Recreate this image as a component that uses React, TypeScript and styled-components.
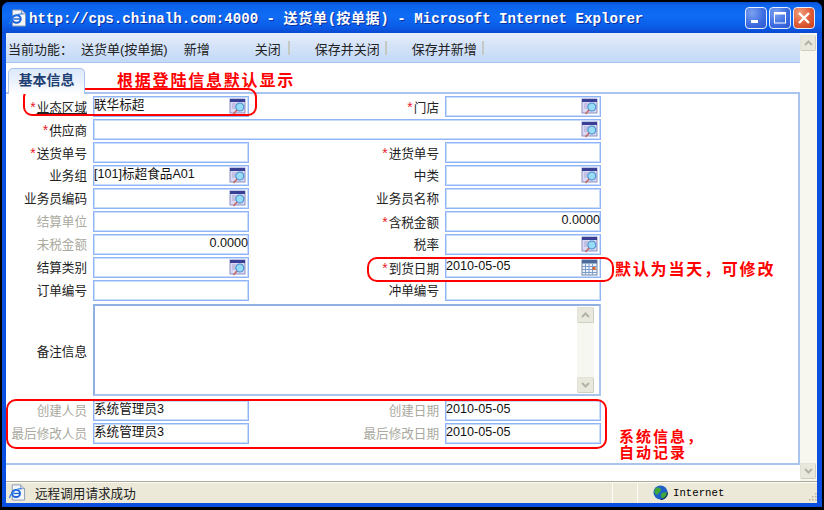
import React from 'react';
import styled, { createGlobalStyle } from 'styled-components';

const SANS = `"Liberation Sans", "Noto Sans CJK SC", sans-serif`;
const MONO = `"Liberation Mono", "Noto Sans CJK SC", monospace`;
const FIELD_BORDER = '#8fb4f8';
const PANEL_BORDER = '#a9c4ee';

const GlobalStyle = createGlobalStyle`
  html, body {
    margin: 0;
    padding: 0;
    background: #000;
  }
  body {
    font-family: ${SANS};
  }
`;

// =============================================================================
// Window chrome
// =============================================================================

const Screen = styled.div`
  position: relative;
  width: 824px;
  height: 510px;
  overflow: hidden;
  background: #000;
  padding: 2px 2px 3px;
  box-sizing: border-box;
`;

const Frame = styled.div`
  height: 100%;
  display: flex;
  flex-direction: column;
  box-sizing: border-box;
  padding: 0 5px 4px 4px;
  background: #0a4fdf;
  border-radius: 7px 7px 0 0;
`;

const TitleBar = styled.div`
  height: 31px;
  flex: none;
  display: flex;
  align-items: center;
  margin: 0 -5px 0 -4px;
  padding: 1px 7px 0 6px;
  box-sizing: border-box;
  border-radius: 7px 7px 0 0;
  background: linear-gradient(180deg, #0a4fd6 0%, #0b63ec 12%, #0f6cf4 45%, #0a5ce8 80%, #0a49d2 100%);
`;

const TitleIcon = styled.svg`
  width: 19px;
  height: 18px;
  flex: none;
  margin-right: 2px;
`;

const TitleText = styled.div`
  font-family: ${MONO};
  font-size: 14.15px;
  font-weight: 700;
  color: #fff;
  text-shadow: 1px 1px 0 #0a2f9c;
  white-space: pre;
  line-height: 18px;
`;

const TitleCjk = styled.span`
  font-family: "Noto Sans CJK SC", sans-serif;
  font-size: 14px;
  letter-spacing: 0.7px;
`;

const WindowButtons = styled.div`
  margin-left: auto;
  display: flex;
  gap: 2px;
`;

const WindowButton = styled.div<{ $close?: boolean }>`
  width: 22px;
  height: 22px;
  box-sizing: border-box;
  border: 1px solid #e8eefc;
  border-radius: 4px;
  display: flex;
  align-items: center;
  justify-content: center;
  background: ${(p) =>
    p.$close
      ? 'radial-gradient(circle at 30% 25%, #f0a080 0%, #e2603a 50%, #c83c18 100%)'
      : 'radial-gradient(circle at 30% 25%, #7ea2f0 0%, #3f6fe2 55%, #2a55cc 100%)'};
`;

const Content = styled.div`
  flex: 1;
  min-height: 0;
  display: flex;
  background: #fff;
`;

const Main = styled.div`
  flex: 1;
  min-width: 0;
  display: flex;
  flex-direction: column;
`;

// =============================================================================
// Toolbar
// =============================================================================

const Toolbar = styled.div`
  height: 30px;
  flex: none;
  display: flex;
  align-items: center;
  padding: 1px 0 0 2px;
  box-sizing: border-box;
  border-bottom: 1px solid #a9c4ee;
  background: linear-gradient(180deg, #e6eefb 0%, #d3e2f8 50%, #c3d9f7 100%);
  font-size: 13px;
  color: #222;
`;

const ToolItem = styled.span<{ $gap?: number }>`
  margin-left: ${(p) => p.$gap ?? 0}px;
  white-space: nowrap;
`;

const ToolSeparator = styled.span<{ $gap: number }>`
  width: 2px;
  height: 14px;
  margin-left: ${(p) => p.$gap}px;
  background: #c6c8c4;
`;

// =============================================================================
// Tabs and form
// =============================================================================

const TabStrip = styled.div`
  height: 29px;
  flex: none;
  display: flex;
  align-items: flex-end;
  padding-left: 2px;
  box-sizing: border-box;
`;

const Tab = styled.div`
  width: 77px;
  height: 26px;
  margin-bottom: -2px;
  position: relative;
  z-index: 1;
  box-sizing: border-box;
  border: 1px solid ${PANEL_BORDER};
  border-bottom: 0;
  border-radius: 5px 5px 0 0;
  background: linear-gradient(180deg, #dce8fa 0%, #eef4fd 60%, #fff 100%);
  color: #1d3f73;
  font-size: 14px;
  font-weight: 700;
  text-align: center;
  line-height: 23px;
`;

const Panel = styled.div`
  height: 373px;
  flex: none;
  box-sizing: border-box;
  border-top: 2px solid ${PANEL_BORDER};
  border-right: 2px solid ${PANEL_BORDER};
  border-bottom: 2px solid ${PANEL_BORDER};
  padding-top: 2px;
`;

const FormGrid = styled.div`
  display: grid;
  grid-template-columns: 87px 156px 196px 156px;
  grid-template-rows: repeat(9, 21px) auto repeat(2, 21px);
  row-gap: 2px;
`;

const Label = styled.div<{ $muted?: boolean; $underline?: boolean }>`
  font-size: 12.6px;
  line-height: 15px;
  padding: 4px 6px 0 0;
  text-align: right;
  white-space: nowrap;
  color: ${(p) => (p.$muted ? '#a9a99e' : '#222')};
  span.text {
    text-decoration: ${(p) => (p.$underline ? 'underline' : 'none')};
  }
`;

const NoteLabel = styled(Label)`
  align-self: center;
`;

const Star = styled.span`
  color: #e8202a;
  font-size: 14px;
  margin-right: 1px;
`;

const Field = styled.div<{ $wide?: boolean; $right?: boolean }>`
  grid-column: ${(p) => (p.$wide ? 'span 3' : 'auto')};
  box-sizing: border-box;
  height: 21px;
  display: flex;
  align-items: flex-start;
  justify-content: ${(p) => (p.$right ? 'flex-end' : 'space-between')};
  border: 1px solid ${FIELD_BORDER};
  box-shadow: inset 0 0 0 1px #c9dcfc;
  padding-top: 1px;
  font-size: 12.6px;
  line-height: 15px;
  color: #111;
  background: #fff;
  white-space: nowrap;
`;

const FieldIcon = styled.svg`
  flex: none;
  width: 17px;
  height: 17px;
  margin-left: auto;
  margin-right: 2px;
`;

const NoteArea = styled.div`
  grid-column: span 3;
  height: 92px;
  margin: 1px 0 2px;
  box-sizing: border-box;
  display: flex;
  justify-content: flex-end;
  border: 2px solid ${PANEL_BORDER};
  border-top-color: #8fb0e0;
  border-left-color: #8fb0e0;
  padding: 1px 5px 1px 0;
  background: #fff;
`;

const NoteScroll = styled.div`
  width: 17px;
  display: flex;
  flex-direction: column;
  justify-content: space-between;
  background: #f7f7f1;
`;

// =============================================================================
// Scrollbars
// =============================================================================

const PageScroll = styled.div`
  width: 17px;
  flex: none;
  display: flex;
  flex-direction: column;
  justify-content: space-between;
  padding: 2px 1px 2px 0;
  box-sizing: border-box;
  background: #f7f7f0;
`;

const ScrollButton = styled.div`
  height: 16px;
  flex: none;
  display: flex;
  align-items: center;
  justify-content: center;
  box-sizing: border-box;
  border: 1px solid #e2e1d6;
  border-right-color: #cfcec2;
  border-bottom-color: #cfcec2;
  border-radius: 2px;
  background: #e9e8dc;
`;

// =============================================================================
// Status bar
// =============================================================================

const StatusBar = styled.div`
  height: 22px;
  flex: none;
  display: flex;
  align-items: center;
  box-sizing: border-box;
  border-top: 1px solid #aca899;
  box-shadow: inset 0 1px 0 #fdfdf8;
  background: #ece9d8;
  font-size: 12.6px;
  color: #222;
`;

const StatusCell = styled.div<{ $width: number }>`
  width: ${(p) => p.$width}px;
  height: 100%;
  flex: none;
  display: flex;
  align-items: center;
  box-sizing: border-box;
  border-right: 1px solid #fdfdf8;
`;

const StatusIcon = styled.svg`
  width: 18px;
  height: 17px;
  flex: none;
  margin: 0 9px 0 2px;
`;

const ZoneIcon = styled.svg`
  width: 15px;
  height: 15px;
  flex: none;
  margin: 0 5px 0 15px;
`;

const ZoneText = styled.span`
  font-family: ${MONO};
  font-size: 10.7px;
  color: #000;
`;

const Grip = styled.svg`
  width: 10px;
  height: 10px;
  margin: 8px 0 0 auto;
`;

// =============================================================================
// Red annotations drawn over the screenshot
// =============================================================================

const Callout = styled.div<{ $x: number; $y: number; $w: number; $h: number; $r: number }>`
  position: absolute;
  left: ${(p) => p.$x}px;
  top: ${(p) => p.$y}px;
  width: ${(p) => p.$w}px;
  height: ${(p) => p.$h}px;
  box-sizing: border-box;
  border: 2px solid #f00;
  border-radius: ${(p) => p.$r}px;
  pointer-events: none;
`;

const Note = styled.div<{ $x: number; $y: number; $size: number; $pitch: number }>`
  position: absolute;
  left: ${(p) => p.$x}px;
  top: ${(p) => p.$y}px;
  color: #f00;
  font-family: "Noto Sans CJK SC", sans-serif;
  font-size: ${(p) => p.$size}px;
  font-weight: 700;
  line-height: 16px;
  letter-spacing: ${(p) => p.$pitch}px;
  white-space: nowrap;
`;

// =============================================================================
// Icons
// =============================================================================

const LookupIcon = () => (
  <FieldIcon viewBox="0 0 17 17">
    <rect x="1" y="1" width="15" height="14" fill="#dcdaf2" stroke="#8a8fc4" strokeWidth="1" />
    <rect x="1" y="1" width="15" height="3" fill="#3a3f96" />
    <path d="M3 6h4M3 8h3M3 10h3" stroke="#a9a6d0" strokeWidth="1" />
    <circle cx="10.8" cy="9" r="4" fill="#96dcf6" stroke="#4f8fd0" strokeWidth="1.2" />
    <path d="M8 12L4.5 16" stroke="#c46a6a" strokeWidth="1.6" />
  </FieldIcon>
);

const CalendarIcon = () => (
  <FieldIcon viewBox="0 0 17 17">
    <rect x="1" y="1" width="15" height="15" fill="#eef2fa" stroke="#6f83a8" strokeWidth="1" />
    <rect x="1" y="1" width="15" height="3.5" fill="#4a6a9c" />
    <path d="M1 7.5h15M1 10.5h15M1 13.5h15M4.5 4.5v11M8 4.5v11M11.5 4.5v11" stroke="#7f9cc8" strokeWidth="1" />
    <rect x="11.5" y="8" width="3" height="3" fill="#e0602a" />
  </FieldIcon>
);

const Chevron = ({ up }: { up?: boolean }) => (
  <svg width="9" height="6" viewBox="0 0 9 6">
    <path d={up ? 'M1 5l3.5-3.5L8 5' : 'M1 1l3.5 3.5L8 1'} fill="none" stroke="#b4b4a6" strokeWidth="2" />
  </svg>
);

const IeGlyph = () => (
  <>
    <path d="M4 1h9l4 4v12H4z" fill="#f4f6fa" stroke="#8a9ab8" strokeWidth="1" />
    <path d="M13 1v4h4" fill="#cfd8ea" stroke="#8a9ab8" strokeWidth="1" />
    <ellipse cx="8" cy="10" rx="4.2" ry="3.8" fill="none" stroke="#1c62d8" strokeWidth="2" />
    <path d="M5 10h6.5" stroke="#1c62d8" strokeWidth="1.4" />
    <path d="M1 15C2 9 9 4 14 5" fill="none" stroke="#2f7fe8" strokeWidth="1.2" />
  </>
);

// =============================================================================
// Data
// =============================================================================

type Row = {
  label: string;
  required?: boolean;
  muted?: boolean;
  underline?: boolean;
  value?: string;
  right?: boolean;
  icon?: 'lookup' | 'calendar';
};

const TOP_ROWS: Row[] = [
  { label: '业态区域', required: true, underline: true, value: '联华标超', icon: 'lookup' },
  { label: '门店', required: true, icon: 'lookup' },
];

const MIDDLE_ROWS: Row[] = [
  { label: '送货单号', required: true },
  { label: '进货单号', required: true },
  { label: '业务组', value: '[101]标超食品A01', icon: 'lookup' },
  { label: '中类', icon: 'lookup' },
  { label: '业务员编码', icon: 'lookup' },
  { label: '业务员名称' },
  { label: '结算单位', muted: true },
  { label: '含税金额', required: true, value: '0.0000', right: true },
  { label: '未税金额', muted: true, value: '0.0000', right: true },
  { label: '税率', icon: 'lookup' },
  { label: '结算类别', icon: 'lookup' },
  { label: '到货日期', required: true, value: '2010-05-05', icon: 'calendar' },
  { label: '订单编号' },
  { label: '冲单编号' },
];

const BOTTOM_ROWS: Row[] = [
  { label: '创建人员', muted: true, value: '系统管理员3' },
  { label: '创建日期', muted: true, value: '2010-05-05' },
  { label: '最后修改人员', muted: true, value: '系统管理员3' },
  { label: '最后修改日期', muted: true, value: '2010-05-05' },
];

const renderCell = (cell: Row) => (
  <React.Fragment key={cell.label}>
    <Label $muted={cell.muted} $underline={cell.underline}>
      {cell.required && <Star>*</Star>}
      <span className="text">{cell.label}</span>
    </Label>
    <Field $right={cell.right}>
      {cell.value && <span>{cell.value}</span>}
      {cell.icon === 'lookup' && <LookupIcon />}
      {cell.icon === 'calendar' && <CalendarIcon />}
    </Field>
  </React.Fragment>
);

// =============================================================================
// Main Component
// =============================================================================

const App = () => (
  <Screen>
    <GlobalStyle />
    <Frame>
      <TitleBar>
        <TitleIcon viewBox="0 0 18 18">
          <IeGlyph />
        </TitleIcon>
        <TitleText>
          http://cps.chinalh.com:4000 - <TitleCjk>送货单</TitleCjk>(<TitleCjk>按单据</TitleCjk>) - Microsoft Internet Explorer
        </TitleText>
        <WindowButtons>
          <WindowButton>
            <svg width="12" height="12" viewBox="0 0 12 12">
              <rect x="1" y="8" width="7" height="3" fill="#fff" />
            </svg>
          </WindowButton>
          <WindowButton>
            <svg width="14" height="14" viewBox="0 0 14 14">
              <rect x="1.5" y="2" width="11" height="10" fill="none" stroke="#fff" strokeWidth="1" />
              <rect x="1" y="1" width="12" height="2.5" fill="#fff" />
            </svg>
          </WindowButton>
          <WindowButton $close>
            <svg width="14" height="14" viewBox="0 0 14 14">
              <path d="M2 2l10 10M12 2L2 12" stroke="#fff" strokeWidth="2.4" />
            </svg>
          </WindowButton>
        </WindowButtons>
      </TitleBar>
      <Content>
        <Main>
          <Toolbar>
            <ToolItem>当前功能：</ToolItem>
            <ToolItem $gap={8}>送货单(按单据)</ToolItem>
            <ToolItem $gap={16}>新增</ToolItem>
            <ToolItem $gap={45}>关闭</ToolItem>
            <ToolSeparator $gap={7} />
            <ToolItem $gap={25}>保存并关闭</ToolItem>
            <ToolSeparator $gap={5} />
            <ToolItem $gap={25}>保存并新增</ToolItem>
            <ToolSeparator $gap={5} />
          </Toolbar>
          <TabStrip>
            <Tab>基本信息</Tab>
          </TabStrip>
          <Panel>
            <FormGrid>
              {TOP_ROWS.map(renderCell)}
              <Label>
                <Star>*</Star>
                <span className="text">供应商</span>
              </Label>
              <Field $wide>
                <LookupIcon />
              </Field>
              {MIDDLE_ROWS.map(renderCell)}
              <NoteLabel>备注信息</NoteLabel>
              <NoteArea>
                <NoteScroll>
                  <ScrollButton>
                    <Chevron up />
                  </ScrollButton>
                  <ScrollButton>
                    <Chevron />
                  </ScrollButton>
                </NoteScroll>
              </NoteArea>
              {BOTTOM_ROWS.map(renderCell)}
            </FormGrid>
          </Panel>
        </Main>
        <PageScroll>
          <ScrollButton>
            <Chevron up />
          </ScrollButton>
          <ScrollButton>
            <Chevron />
          </ScrollButton>
        </PageScroll>
      </Content>
      <StatusBar>
        <StatusCell $width={607}>
          <StatusIcon viewBox="0 0 18 18">
            <IeGlyph />
          </StatusIcon>
          远程调用请求成功
        </StatusCell>
        <StatusCell $width={25} />
        <ZoneIcon viewBox="0 0 15 15">
          <circle cx="7.5" cy="7.5" r="7" fill="#1f5fc8" />
          <path d="M3 3c3-1 5 0 5 2S6 7 5 9 2 9 1.5 7 2 4 3 3zM9 8c2-1 4-1 5 0s-1 4-3 5-3-1-3-2 0-2 1-3z" fill="#3fa83a" />
          <path d="M7.5 14.5a7 7 0 0 0 7-7" fill="none" stroke="#0c2a60" strokeWidth="1.2" />
        </ZoneIcon>
        <ZoneText>Internet</ZoneText>
        <Grip viewBox="0 0 10 10">
          <path d="M8 1h1.5v1.5H8zM5 4h1.5v1.5H5zM8 4h1.5v1.5H8zM2 7h1.5v1.5H2zM5 7h1.5v1.5H5zM8 7h1.5v1.5H8z" fill="#b8b5a2" />
        </Grip>
      </StatusBar>
    </Frame>
    <Callout $x={23} $y={88} $w={234} $h={28} $r={9} />
    <Callout $x={367} $y={257} $w={247} $h={25} $r={10} />
    <Callout $x={6} $y={399} $w={601} $h={50} $r={10} />
    <Note $x={117} $y={71} $size={16} $pitch={1.8}>根据登陆信息默认显示</Note>
    <Note $x={615} $y={260} $size={16} $pitch={1.8}>默认为当天，可修改</Note>
    <Note $x={619} $y={428} $size={15} $pitch={2}>
      系统信息，
      <br />
      自动记录
    </Note>
  </Screen>
);

export default App;
